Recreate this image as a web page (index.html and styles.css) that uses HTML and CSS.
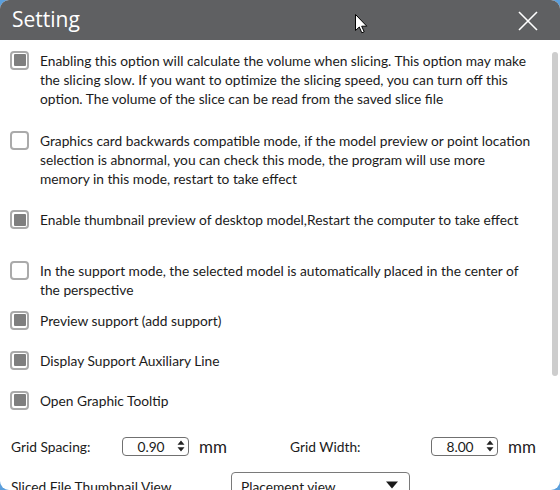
FILE: index.html
```html
<!DOCTYPE html>
<html>
<head>
<meta charset="utf-8">
<link rel="stylesheet" href="styles.css">
</head>
<body>
<div class="window">
  <div class="titlebar">
    <span class="title">Setting</span>
    <svg class="cursor" width="13" height="20" viewBox="0 0 13 20"><path d="M0.5 0.5 L0.5 16.5 L4.3 13 L6.8 18.8 L9.2 17.8 L6.7 12.2 L11.8 12.2 Z" fill="#fff" stroke="#000" stroke-width="1" stroke-linejoin="miter"/></svg>
    <svg class="close" width="20" height="20" viewBox="0 0 20 20"><path d="M1 1 L19 19 M19 1 L1 19" stroke="#fff" stroke-width="1.6" fill="none"/></svg>
  </div>
  <div class="body">
    <div class="main">
      <div class="item">
        <span class="cb on"><span class="mark"></span></span>
        <span class="label">Enabling this option will calculate the volume when slicing. This option may make<br>the slicing slow. If you want to optimize the slicing speed, you can turn off this<br>option. The volume of the slice can be read from the saved slice file</span>
      </div>
      <div class="item gap23">
        <span class="cb"></span>
        <span class="label">Graphics card backwards compatible mode, if the model preview or point location<br>selection is abnormal, you can check this mode, the program will use more<br>memory in this mode, restart to take effect</span>
      </div>
      <div class="item gap22">
        <span class="cb on"><span class="mark"></span></span>
        <span class="label">Enable thumbnail preview of desktop model,Restart the computer to take effect</span>
      </div>
      <div class="item gap32">
        <span class="cb"></span>
        <span class="label">In the support mode, the selected model is automatically placed in the center of<br>the perspective</span>
      </div>
      <div class="item gap12">
        <span class="cb on"><span class="mark"></span></span>
        <span class="label">Preview support (add support)</span>
      </div>
      <div class="item gap21">
        <span class="cb on"><span class="mark"></span></span>
        <span class="label">Display Support Auxiliary Line</span>
      </div>
      <div class="item gap21">
        <span class="cb on"><span class="mark"></span></span>
        <span class="label">Open Graphic Tooltip</span>
      </div>
      <div class="grid-row">
        <div class="group g1">
          <span class="glabel l1">Grid Spacing:</span>
          <span class="spin"><span class="val">0.90</span><svg class="arrows" width="8" height="12" viewBox="0 0 8 12"><path d="M4 0.5 L7.5 4.8 L0.5 4.8 Z M0.5 7.2 L7.5 7.2 L4 11.5 Z" fill="#222"/></svg></span>
          <span class="unit">mm</span>
        </div>
        <div class="group">
          <span class="glabel l2">Grid Width:</span>
          <span class="spin"><span class="val">8.00</span><svg class="arrows" width="8" height="12" viewBox="0 0 8 12"><path d="M4 0.5 L7.5 4.8 L0.5 4.8 Z M0.5 7.2 L7.5 7.2 L4 11.5 Z" fill="#222"/></svg></span>
          <span class="unit">mm</span>
        </div>
      </div>
      <div class="thumb-row">
        <span class="tlabel">Sliced File Thumbnail View</span>
        <div class="dropdown">
          <span class="dval">Placement view</span>
          <svg class="darrow" width="12" height="8" viewBox="0 0 12 8"><path d="M0 0.5 L12 0.5 L6 7.5 Z" fill="#1a1a1a"/></svg>
        </div>
      </div>
    </div>
    <div class="scroll"><div class="thumb"></div></div>
  </div>
</div>
</body>
</html>
```
FILE: styles.css
```css
html, body {
  margin: 0;
  padding: 0;
  background: #5b9fdc;
  width: 560px;
  height: 490px;
  overflow: hidden;
}
.window {
  width: 560px;
  height: 490px;
  background: #fff;
  border-radius: 9px;
  overflow: hidden;
  font-family: "Lato", "Noto Sans", sans-serif;
  color: #1b1b1b;
  display: flex;
  flex-direction: column;
}
.titlebar {
  position: relative;
  height: 40px;
  flex: none;
  background: #5f6062;
  display: flex;
  align-items: center;
  padding-left: 12px;
}
.title {
  color: #fff;
  font-size: 21px;
  font-family: "Open Sans", "Noto Sans", sans-serif;
  margin-top: -2px;
}
.cursor {
  position: absolute;
  left: 355px;
  top: 14px;
}
.close {
  position: absolute;
  left: 518px;
  top: 11px;
}
.body {
  flex: 1;
  display: flex;
  min-height: 0;
}
.main {
  flex: 1;
  padding-top: 10.5px;
  padding-left: 10px;
}
.scroll {
  width: 6px;
  margin-right: 2px;
  padding-top: 12px;
}
.thumb {
  height: 324px;
  background: #cdcdcd;
  border-radius: 3px;
}
.item {
  display: flex;
  align-items: flex-start;
  font-size: 13.75px;
  line-height: 19px;
}
.gap23 { margin-top: 23px; }
.gap22 { margin-top: 22.5px; }
.gap32 { margin-top: 31.5px; }
.gap12 { margin-top: 12px; }
.gap21 { margin-top: 21px; }
.cb {
  box-sizing: border-box;
  width: 19px;
  height: 19px;
  border: 2px solid #aaaaaa;
  border-radius: 4px;
  flex: none;
  display: flex;
  align-items: center;
  justify-content: center;
}
.mark {
  width: 12px;
  height: 12px;
  background: #7f7f7f;
  border-radius: 1px;
}
.label {
  margin-left: 11px;
  white-space: nowrap;
}
.grid-row {
  margin-top: 26px;
  display: flex;
  align-items: center;
  font-size: 13.75px;
  padding-left: 1px;
}
.group {
  display: flex;
  align-items: center;
}
.g1 { width: 279px; }
.glabel { flex: none; }
.l1 { width: 111px; }
.l2 { width: 141px; }
.spin {
  box-sizing: border-box;
  width: 67px;
  height: 19px;
  border: 1px solid #707070;
  border-radius: 4px;
  display: flex;
  align-items: center;
  flex: none;
}
.val {
  flex: 1;
  text-align: center;
  font-size: 13.75px;
  padding-left: 2px;
}
.arrows {
  margin-right: 3px;
}
.unit {
  margin-left: 10px;
  font-size: 17px;
  color: #222;
}
.thumb-row {
  margin-top: 15.5px;
  display: flex;
  align-items: flex-start;
  font-size: 13.75px;
  padding-left: 1px;
}
.tlabel {
  width: 220px;
  flex: none;
  margin-top: 6px;
}
.dropdown {
  box-sizing: border-box;
  width: 179px;
  height: 28px;
  border: 1px solid #7a7a7a;
  border-radius: 4px;
  display: flex;
  align-items: center;
  padding-left: 9px;
  padding-right: 11px;
}
.dval {
  flex: 1;
}
.darrow {
  margin-top: -2px;
}
```
